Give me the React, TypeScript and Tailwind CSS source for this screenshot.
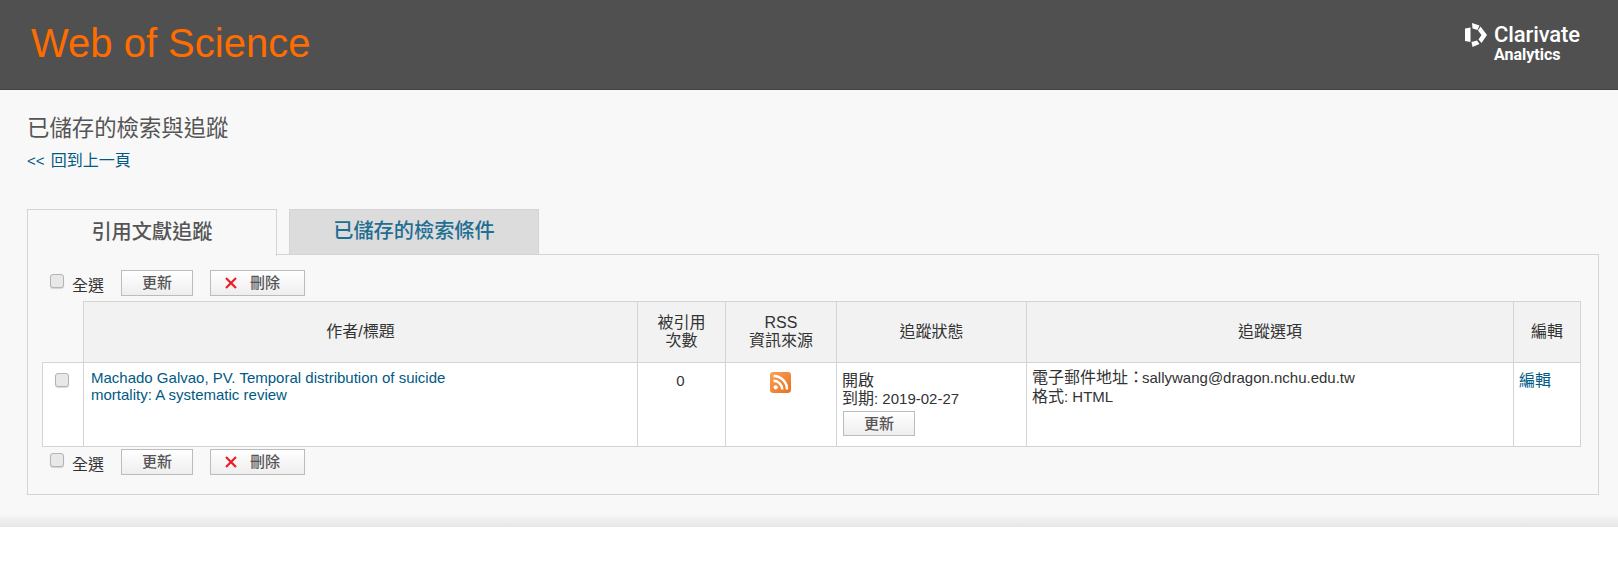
const sans = "font-['Liberation_Sans','Noto_Sans_CJK_TC',sans-serif]";

function Checkbox({ className = '' }: { className?: string }) {
  return (
    <span
      className={`inline-block w-[14px] h-[14px] rounded-[3px] border border-[#b4b4b4] bg-[#e8e8e8] shadow-[0_1px_1px_rgba(0,0,0,0.15)] ${className}`}
    />
  );
}

function GrayButton({ children, className = '' }: { children: React.ReactNode; className?: string }) {
  return (
    <button
      type="button"
      className={`border border-[#bcbcbc] bg-gradient-to-b from-white to-[#eeeeee] text-[15px] font-medium text-[#555555] flex items-center justify-center ${className}`}
    >
      {children}
    </button>
  );
}

function ActionBar({ className = '' }: { className?: string }) {
  return (
    <div className={`flex items-start pl-[23px] ${className}`}>
      <Checkbox className="mt-[4px]" />
      <span className="ml-[8px] mt-[7px] text-[16px] leading-[18px] text-[#333333]">全選</span>
      <GrayButton className="ml-[17px] w-[72px] h-[26px]">更新</GrayButton>
      <GrayButton className="ml-[17px] w-[95px] h-[26px] !justify-start pl-[14px] gap-[13px]">
        <svg width="12" height="12" viewBox="0 0 12 12" fill="none" stroke="#ee1c25" strokeWidth="2.2">
          <line x1="1" y1="1" x2="11" y2="11" />
          <line x1="11" y1="1" x2="1" y2="11" />
        </svg>
        刪除
      </GrayButton>
    </div>
  );
}

function ClarivateLogo() {
  return (
    <div className="flex items-start text-white">
      <svg width="22" height="24" viewBox="0 0 22 24" className="mt-[-1px]" fill="#ffffff">
        <path d="M7 0 L14.5 2.5 L12.5 7 L7.5 5.5 Z" />
        <path d="M15.5 3.5 L22 12 L16.5 20 L13.5 16.5 L16.5 12 L13 7.5 Z" />
        <path d="M6.5 19 L12 17.5 L14.5 21 L7.5 24 Z" />
        <path d="M0 5.5 L5.5 4.5 L5.5 19 L0 18 Z" />
      </svg>
      <div className="ml-[7px]">
        <div className="font-['Roboto',sans-serif] font-medium text-[22px] leading-[22px] tracking-[-0.1px]">Clarivate</div>
        <div className="font-['Roboto',sans-serif] font-bold text-[16px] leading-[15px] mt-[1px]">Analytics</div>
      </div>
    </div>
  );
}

function RssIcon() {
  return (
    <svg width="21" height="21" viewBox="0 0 20 20" className="mx-auto">
      <defs>
        <linearGradient id="rss" x1="0" y1="0" x2="1" y2="1">
          <stop offset="0" stopColor="#f9a25a" />
          <stop offset="1" stopColor="#e8701f" />
        </linearGradient>
      </defs>
      <rect width="20" height="20" rx="3" fill="url(#rss)" />
      <circle cx="5.4" cy="14.6" r="2" fill="#ffffff" />
      <path d="M3.4 8.4a8.2 8.2 0 0 1 8.2 8.2" fill="none" stroke="#ffffff" strokeWidth="2.4" />
      <path d="M3.4 3.8a12.8 12.8 0 0 1 12.8 12.8" fill="none" stroke="#ffffff" strokeWidth="2.4" />
    </svg>
  );
}

const headCell = 'border border-[#d4d4d4] bg-[#f2f2f2] font-normal text-[16px] leading-[18px] text-center align-middle';
const bodyCell = 'border border-[#d4d4d4] bg-white align-top';

export default function App() {
  return (
    <div className={`${sans} min-h-[570px] bg-white text-[15px] text-[#333333]`}>
      <header className="h-[90px] bg-[#505050] border-b border-[#444444] flex items-start justify-between pl-[31px] pr-[38px]">
        <h1 className="mt-[20px] text-[40px] leading-[46px] text-[#ff6c00] font-normal">Web of Science</h1>
        <div className="mt-[24px]">
          <ClarivateLogo />
        </div>
      </header>

      <main className="h-[437px] bg-gradient-to-b from-[#f8f8f8] from-[97%] to-[#e6e6e6] pl-[27px] pr-[19px]">
        <h2 className="pt-[25px] text-[22.4px] leading-[28px] font-normal text-[#555555]">已儲存的檢索與追蹤</h2>
        <a className="block mt-[8px] text-[15px] leading-[20px] text-[#005a84]">
          &lt;&lt; <span className="ml-[2px] text-[16px]">回到上一頁</span>
        </a>

        <div className="mt-[38px] flex items-start">
          <div className="relative z-10 w-[250px] h-[47px] -mb-[1px] pb-[2px] border border-b-0 border-[#d4d4d4] bg-[#f8f8f8] flex items-center justify-center text-[20.2px] font-medium text-[#555555]">
            引用文獻追蹤
          </div>
          <div className="ml-[12px] w-[250px] h-[46px] pb-[2px] border border-[#d4d4d4] bg-[#dcdcdc] flex items-center justify-center text-[20.2px] font-medium text-[#1f6f93]">
            已儲存的檢索條件
          </div>
        </div>

        <section className="h-[241px] -mt-[1px] border border-[#d4d4d4] pl-[14px] pr-[16px]">
          <ActionBar className="mt-[15px] -ml-[15px]" />
          <table className="mt-[5px] w-[1538px] table-fixed border-collapse">
            <colgroup>
              <col className="w-[41px]" />
              <col className="w-[554px]" />
              <col className="w-[88px]" />
              <col className="w-[111px]" />
              <col className="w-[190px]" />
              <col className="w-[487px]" />
              <col className="w-[67px]" />
            </colgroup>
            <thead>
              <tr className="h-[61px]">
                <th className="border-0" />
                <th className={headCell}>作者/標題</th>
                <th className={headCell}>被引用<br />次數</th>
                <th className={headCell}>RSS<br />資訊來源</th>
                <th className={headCell}>追蹤狀態</th>
                <th className={headCell}>追蹤選項</th>
                <th className={headCell}>編輯</th>
              </tr>
            </thead>
            <tbody>
              <tr className="h-[84px]">
                <td className={`${bodyCell} text-center pt-[8px] pr-[2px]`}>
                  <Checkbox />
                </td>
                <td className={`${bodyCell} px-[7px] pt-[6px] leading-[17px] text-[#005a84]`}>
                  <a>Machado Galvao, PV. Temporal distribution of suicide<br />mortality: A systematic review</a>
                </td>
                <td className={`${bodyCell} text-center pt-[9px] pr-[2px] leading-[17px]`}>0</td>
                <td className={`${bodyCell} pt-[9px] pr-[2px]`}>
                  <RssIcon />
                </td>
                <td className={`${bodyCell} px-[5px] pt-[9px] leading-[18px]`}>
                  <span className="text-[16px]">開啟</span><br />
                  <span className="text-[16px]">到期</span>: 2019-02-27
                  <GrayButton className="ml-[1px] mt-[3px] w-[72px] h-[25px]">更新</GrayButton>
                </td>
                <td className={`${bodyCell} px-[5px] pt-[5px] leading-[19px]`}>
                  <span className="text-[16px]">電子郵件地址：</span><span className="-ml-[2px]">sallywang@dragon.nchu.edu.tw</span><br />
                  <span className="text-[16px]">格式</span>: HTML
                </td>
                <td className={`${bodyCell} px-[5px] pt-[9px] leading-[17px] text-[16px] text-[#005a84]`}>
                  <a>編輯</a>
                </td>
              </tr>
            </tbody>
          </table>
          <ActionBar className="mt-[2px] -ml-[15px]" />
        </section>
      </main>
    </div>
  );
}
